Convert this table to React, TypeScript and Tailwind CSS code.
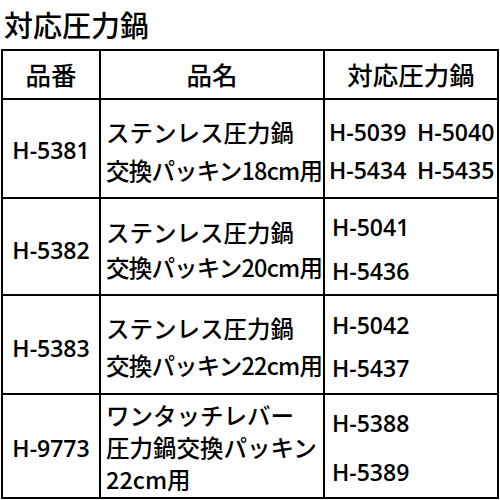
import React from "react";

const latin = { fontFamily: '"Open Sans", "Noto Sans CJK JP", sans-serif' };
const jp = { fontFamily: '"Noto Sans CJK JP", sans-serif' };

export default function App() {
  const cell = "bg-white flex flex-col";
  const code = `${cell} items-center justify-center text-[23px] font-semibold`;
  const name = `${cell} justify-center pl-[5px] text-[23.5px] font-medium whitespace-nowrap`;
  const codes = `${cell} justify-center text-[23px] font-semibold whitespace-nowrap`;
  return (
    <div className="w-[500px] h-[500px] bg-white text-black overflow-hidden" style={jp}>
      <div className="h-[49px] flex items-center pl-[4px] text-[29px] font-medium leading-none">
        対応圧力鍋
      </div>
      <div className="ml-[1px] w-[498px] h-[450px] border-2 border-black bg-black grid grid-cols-[96px_222px_172px] grid-rows-[47px_97px_95px_97px_102px] gap-[2px]">
        {/* header */}
        <div className={`${cell} items-center justify-center text-[25.5px] font-medium`}>品番</div>
        <div className={`${cell} items-center justify-center text-[25.5px] font-medium`}>品名</div>
        <div className={`${cell} items-center justify-center text-[25.5px] font-medium`}>対応圧力鍋</div>

        {/* row 1 */}
        <div className={`${code} pt-[3px]`} style={latin}>H-5381</div>
        <div className={`${name} pt-[5px] leading-[38px]`}>
          <span>ステンレス圧力鍋</span>
          <span className="tracking-[-0.8px]">交換パッキン18cm用</span>
        </div>
        <div className={`${codes} pt-[5px] pl-[4px] leading-[38px]`} style={latin}>
          <div className="grid grid-cols-[88px_auto]">
            <span>H-5039</span>
            <span>H-5040</span>
          </div>
          <div className="grid grid-cols-[88px_auto]">
            <span>H-5434</span>
            <span>H-5435</span>
          </div>
        </div>

        {/* row 2 */}
        <div className={`${code} pt-[7px]`} style={latin}>H-5382</div>
        <div className={`${name} pt-[6px] leading-[35px]`}>
          <span>ステンレス圧力鍋</span>
          <span className="tracking-[-0.8px]">交換パッキン20cm用</span>
        </div>
        <div className={`${codes} pt-[5px] pl-[7px] leading-[44px]`} style={latin}>
          <span>H-5041</span>
          <span>H-5436</span>
        </div>

        {/* row 3 */}
        <div className={`${code} pt-[7px]`} style={latin}>H-5383</div>
        <div className={`${name} pt-[4px] leading-[37px]`}>
          <span>ステンレス圧力鍋</span>
          <span className="tracking-[-0.8px]">交換パッキン22cm用</span>
        </div>
        <div className={`${codes} pt-[4px] pl-[7px] leading-[43px]`} style={latin}>
          <span>H-5042</span>
          <span>H-5437</span>
        </div>

        {/* row 4 */}
        <div className={`${code} pt-[4px]`} style={latin}>H-9773</div>
        <div className={`${name} pt-[2px] leading-[32px]`}>
          <span>ワンタッチレバー</span>
          <span>圧力鍋交換パッキン</span>
          <span>22cm用</span>
        </div>
        <div className={`${codes} pt-[3px] pl-[7px] leading-[49px]`} style={latin}>
          <span>H-5388</span>
          <span>H-5389</span>
        </div>
      </div>
    </div>
  );
}
